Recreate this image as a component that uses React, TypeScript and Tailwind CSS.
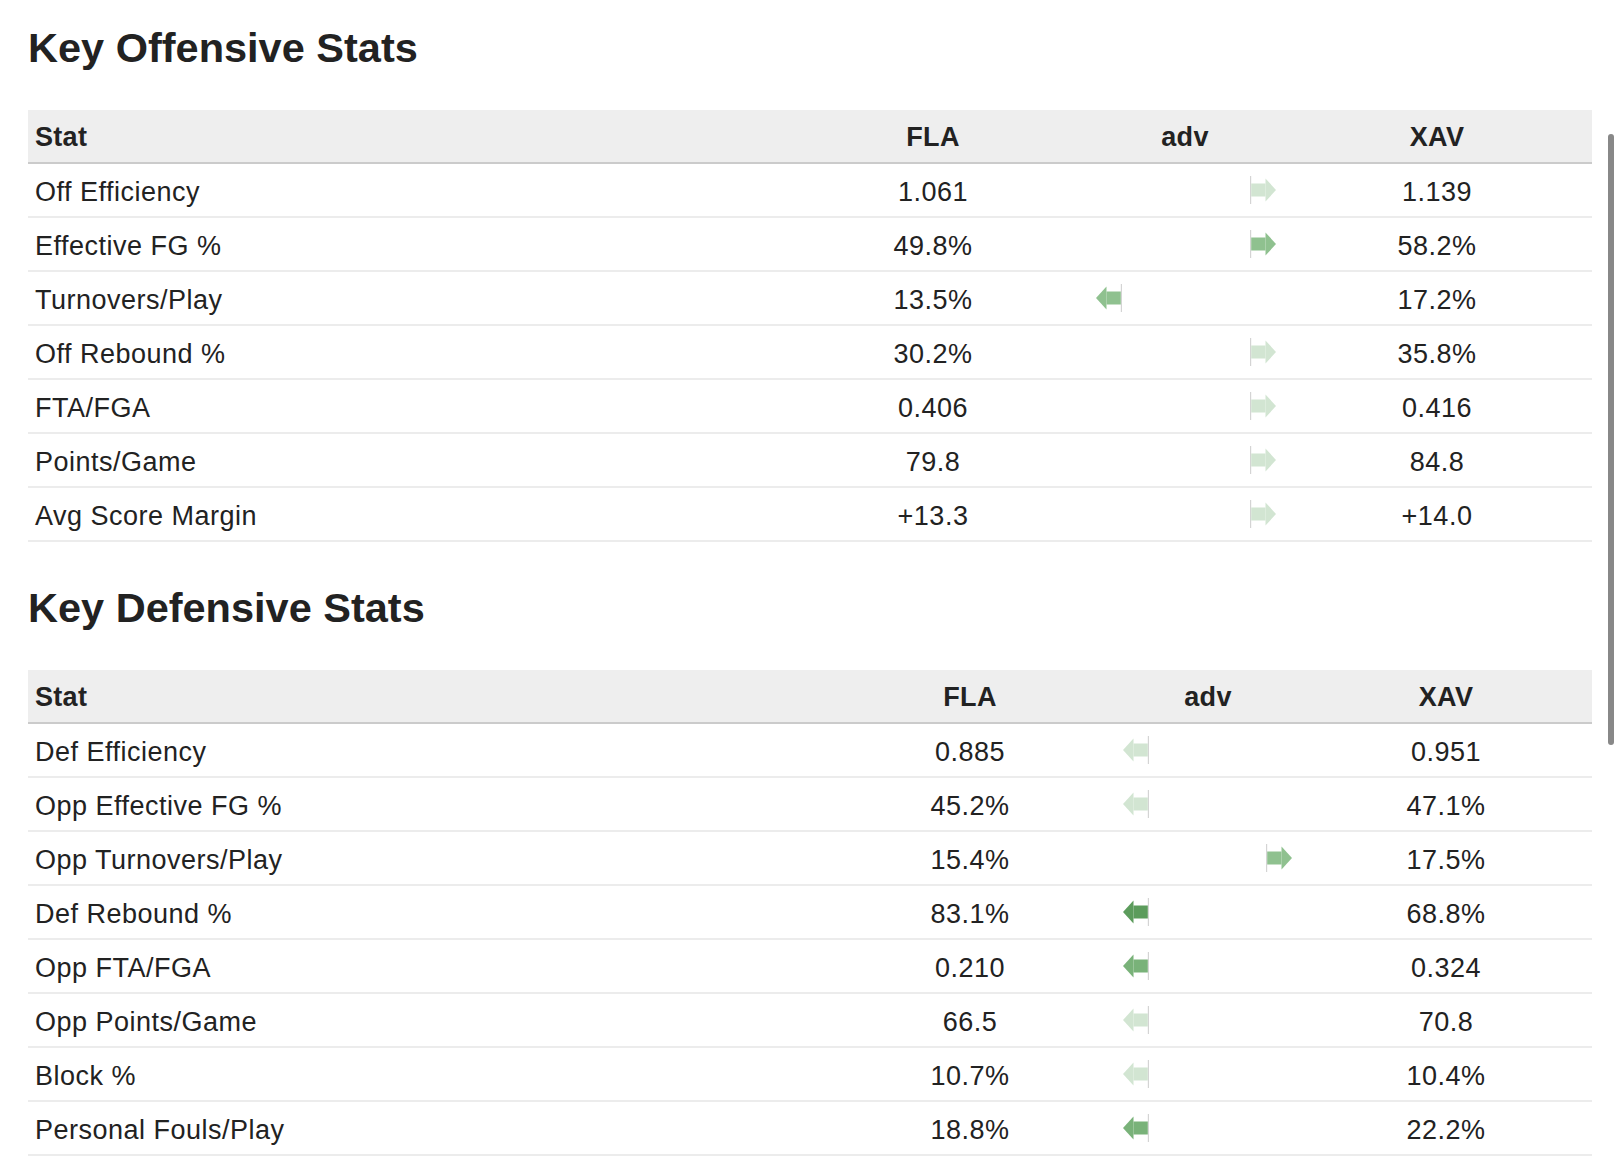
import React from "react";

type Dir = "left" | "right";
type Row = { stat: string; a: string; b: string; dir: Dir; color: string };

const LIGHT = "#d2e5d2";
const MED = "#8fc18f";
const MED2 = "#79b279";
const DARK = "#5c9c5c";

const offense: Row[] = [
  { stat: "Off Efficiency", a: "1.061", b: "1.139", dir: "right", color: LIGHT },
  { stat: "Effective FG %", a: "49.8%", b: "58.2%", dir: "right", color: MED },
  { stat: "Turnovers/Play", a: "13.5%", b: "17.2%", dir: "left", color: MED },
  { stat: "Off Rebound %", a: "30.2%", b: "35.8%", dir: "right", color: LIGHT },
  { stat: "FTA/FGA", a: "0.406", b: "0.416", dir: "right", color: LIGHT },
  { stat: "Points/Game", a: "79.8", b: "84.8", dir: "right", color: LIGHT },
  { stat: "Avg Score Margin", a: "+13.3", b: "+14.0", dir: "right", color: LIGHT },
];

const defense: Row[] = [
  { stat: "Def Efficiency", a: "0.885", b: "0.951", dir: "left", color: LIGHT },
  { stat: "Opp Effective FG %", a: "45.2%", b: "47.1%", dir: "left", color: LIGHT },
  { stat: "Opp Turnovers/Play", a: "15.4%", b: "17.5%", dir: "right", color: MED },
  { stat: "Def Rebound %", a: "83.1%", b: "68.8%", dir: "left", color: DARK },
  { stat: "Opp FTA/FGA", a: "0.210", b: "0.324", dir: "left", color: MED2 },
  { stat: "Opp Points/Game", a: "66.5", b: "70.8", dir: "left", color: LIGHT },
  { stat: "Block %", a: "10.7%", b: "10.4%", dir: "left", color: LIGHT },
  { stat: "Personal Fouls/Play", a: "18.8%", b: "22.2%", dir: "left", color: MED2 },
];

function Arrow({ dir, color }: { dir: Dir; color: string }) {
  if (dir === "right") {
    return (
      <svg width="27" height="28" viewBox="0 0 27 28" className="block">
        <rect x="0" y="0" width="1.2" height="28" fill="#d4d4d4" />
        <rect x="1.2" y="7.5" width="14.3" height="13" fill={color} />
        <polygon points="15.5,2.5 26,14 15.5,25.5" fill={color} />
      </svg>
    );
  }
  return (
    <svg width="27" height="28" viewBox="0 0 27 28" className="block">
      <rect x="25.8" y="0" width="1.2" height="28" fill="#d4d4d4" />
      <rect x="11.5" y="7.5" width="14.3" height="13" fill={color} />
      <polygon points="11.5,2.5 1,14 11.5,25.5" fill={color} />
    </svg>
  );
}

type Cfg = {
  grid: string;
  leftPad: string;
  rightPad: string;
};

const cfg1: Cfg = {
  grid: "grid-cols-[779px_252px_252px_252px_29px]",
  leftPad: "pl-[36px]",
  rightPad: "pl-[191px]",
};
const cfg2: Cfg = {
  grid: "grid-cols-[823px_238px_238px_238px_27px]",
  leftPad: "pl-[33px]",
  rightPad: "pl-[177px]",
};

function StatTable({ rows, cfg }: { rows: Row[]; cfg: Cfg }) {
  return (
    <div className="w-[1564px]">
      <div
        className={`grid ${cfg.grid} h-[54px] items-center bg-[#eeeeee] border-b-2 border-[#cbcbcb] font-bold tracking-[0.3px]`}
      >
        <div className="pl-[7px] pt-[2px]">Stat</div>
        <div className="text-center pt-[2px]">FLA</div>
        <div className="text-center pt-[2px]">adv</div>
        <div className="text-center pt-[2px]">XAV</div>
        <div />
      </div>
      {rows.map((r) => (
        <div
          key={r.stat}
          className={`grid ${cfg.grid} h-[54px] items-center border-b-2 border-[#ececec] tracking-[0.5px]`}
        >
          <div className="pl-[7px] pt-[4px]">{r.stat}</div>
          <div className="text-center pt-[4px]">{r.a}</div>
          <div
            className={`flex h-full items-center ${
              r.dir === "left" ? cfg.leftPad : cfg.rightPad
            }`}
          >
            <Arrow dir={r.dir} color={r.color} />
          </div>
          <div className="text-center pt-[4px]">{r.b}</div>
          <div />
        </div>
      ))}
    </div>
  );
}

export default function App() {
  return (
    <div
      className="relative h-[1174px] w-[1620px] overflow-hidden bg-white pl-[28px] text-[27px] leading-[30px] text-[#222222]"
      style={{ fontFamily: '"Liberation Sans", Arial, Helvetica, sans-serif' }}
    >
      <h2 className="pt-[25px] mb-[39px] text-[41.5px] leading-[46px] font-bold">
        Key Offensive Stats
      </h2>
      <StatTable rows={offense} cfg={cfg1} />
      <h2 className="mt-[43px] mb-[39px] text-[41.5px] leading-[46px] font-bold">
        Key Defensive Stats
      </h2>
      <StatTable rows={defense} cfg={cfg2} />
      <div className="absolute left-[1608px] top-[134px] h-[611px] w-[6px] rounded-full bg-[#888888]" />
    </div>
  );
}
